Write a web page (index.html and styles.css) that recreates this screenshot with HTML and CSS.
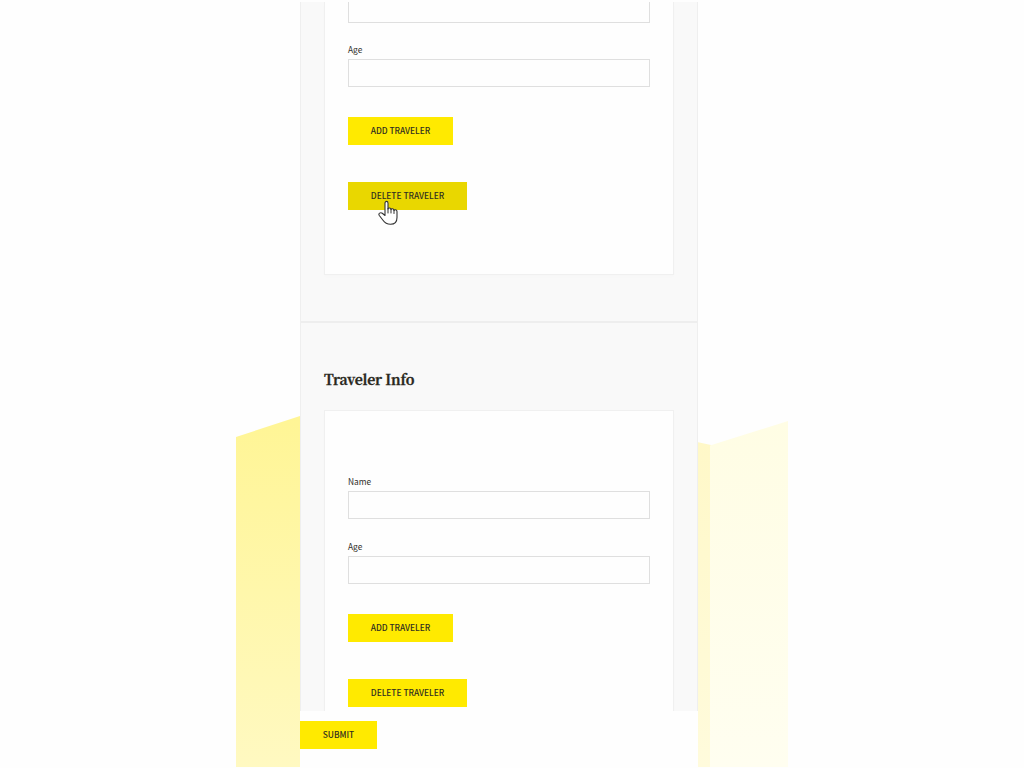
FILE: index.html
```html
<!DOCTYPE html>
<html lang="en">
<head>
<meta charset="utf-8">
<title>Traveler Info</title>
<link rel="stylesheet" href="styles.css">
</head>
<body>
<svg class="backdrop" viewBox="0 0 1024 768" aria-hidden="true">
  <defs>
    <linearGradient id="left" x1="0" y1="0" x2="0" y2="1"><stop offset="0" stop-color="#fff595"/><stop offset="1" stop-color="#fff9c1"/></linearGradient>
    <linearGradient id="fold" x1="0" y1="0" x2="0" y2="1"><stop offset="0" stop-color="#fff8c8"/><stop offset="1" stop-color="#fffbdc"/></linearGradient>
    <linearGradient id="right" x1="0" y1="0" x2="0" y2="1"><stop offset="0" stop-color="#fffde4"/><stop offset="1" stop-color="#fffef0"/></linearGradient>
  </defs>
  <path d="M236 437L300 416V767H236Z" fill="url(#left)"/>
  <path d="M697 442L711 445V767H697Z" fill="url(#fold)"/>
  <path d="M710 445.500L788 421V767H710Z" fill="url(#right)"/>
</svg>
<form class="form">
  <div class="sections">
    <section class="section section-first">
      <div class="card card-first">
        <input class="input input-clipped" type="text" aria-label="Name">
        <label class="field"><span class="label">Age</span><input class="input" type="text"></label>
        <button class="button add" type="button">ADD TRAVELER</button>
        <button class="button delete active" type="button">DELETE TRAVELER</button>
      </div>
    </section>
    <section class="section">
      <h2 class="title">Traveler Info</h2>
      <div class="card card-second">
        <label class="field"><span class="label">Name</span><input class="input" type="text"></label>
        <label class="field"><span class="label">Age</span><input class="input" type="text"></label>
        <button class="button add" type="button">ADD TRAVELER</button>
        <button class="button delete" type="button">DELETE TRAVELER</button>
      </div>
    </section>
  </div>
  <div class="footer"><button class="button submit" type="button">SUBMIT</button></div>
</form>
<svg class="pointer" viewBox="0 0 22 26" aria-hidden="true">
  <path d="M7 14V3.200C7 .7 10 .7 10 3.200V9C10 7.500 13 7.500 13 9.500C13.300 8.300 16 8.500 16 10.500C16.300 9.300 19 9.500 19 11.500V17.500C19 22 16.500 24.300 12.500 24.300C8.500 24.300 6.500 22.500 4.800 20L1.300 15.500C0 13.500 2.500 12 4.300 13.300L7 15.500Z" fill="#fff" stroke="#333" stroke-width="1.100" stroke-linejoin="round"/>
  <path d="M10 8.500V13M13 9.500V13M16 10.500V13.500" fill="none" stroke="#333" stroke-width="1" stroke-linecap="round"/>
</svg>
</body>
</html>
```
FILE: styles.css
```css
* {
  box-sizing: border-box;
}

body {
  position: relative;
  width: 1024px;
  height: 768px;
  margin: 0;
  overflow: hidden;
  background: #fefefe;
  color: #302e28;
  font-family: "Noto Sans CJK JP", "Noto Sans", sans-serif;
  font-size: 8.4px;
}

.backdrop {
  position: absolute;
  inset: 0;
  width: 1024px;
  height: 768px;
}

.form {
  position: relative;
  width: 398px;
  height: 768px;
  margin-left: 300px;
  padding-top: 2px;
}

.sections {
  height: 709px;
  overflow: hidden;
  background: #f9f9f9;
  border: solid #efefef;
  border-width: 0 1px;
}

.section {
  padding: 0 23px;
}

.section-first {
  height: 321px;
  border-bottom: 2px solid #eeeeee;
}

.card {
  display: flex;
  flex-direction: column;
  align-items: flex-start;
  width: 350px;
  padding: 0 23px;
  background: #fefefe;
  border: 1px solid #f0f0f0;
  box-shadow: 0 2px 3px rgba(0, 0, 0, 0.01);
}

.card-first {
  height: 273px;
  border-top: 0;
}

.card-second {
  height: 360px;
  padding-top: 63px;
}

.field {
  display: block;
  height: 65px;
}

.label {
  display: block;
  height: 17px;
  line-height: 15px;
}

.input {
  display: block;
  width: 302px;
  height: 28px;
  padding: 0 8px;
  background: #fefefe;
  border: 1px solid #dfdfdf;
  border-radius: 0;
  outline: 0;
  font: inherit;
}

.input-clipped {
  height: 21px;
  margin-bottom: 19px;
  border-top: 0;
}

.button {
  flex: none;
  height: 28px;
  padding: 0 0 2px;
  background: #ffea00;
  border: 0;
  color: #302e20;
  font: 500 8.4px/26px "Noto Sans CJK JP", "Noto Sans", sans-serif;
  text-align: center;
  white-space: nowrap;
}

.add {
  width: 105px;
  margin-top: 10px;
}

.delete {
  width: 119px;
  margin-top: 37px;
}

.active {
  background: #e9d700;
}

.title {
  height: 87px;
  margin: 0;
  padding-top: 45px;
  color: #292820;
  font: bold 14px/22px "Noto Serif CJK JP", "Noto Serif", "Liberation Serif", serif;
  letter-spacing: -0.18px;
  -webkit-text-stroke: 0.3px #292820;
}

.footer {
  display: flex;
  height: 57px;
  padding-top: 10px;
  background: #fefefe;
}

.submit {
  width: 77px;
}

.pointer {
  position: absolute;
  left: 378px;
  top: 200px;
  width: 22px;
  height: 26px;
}
```
